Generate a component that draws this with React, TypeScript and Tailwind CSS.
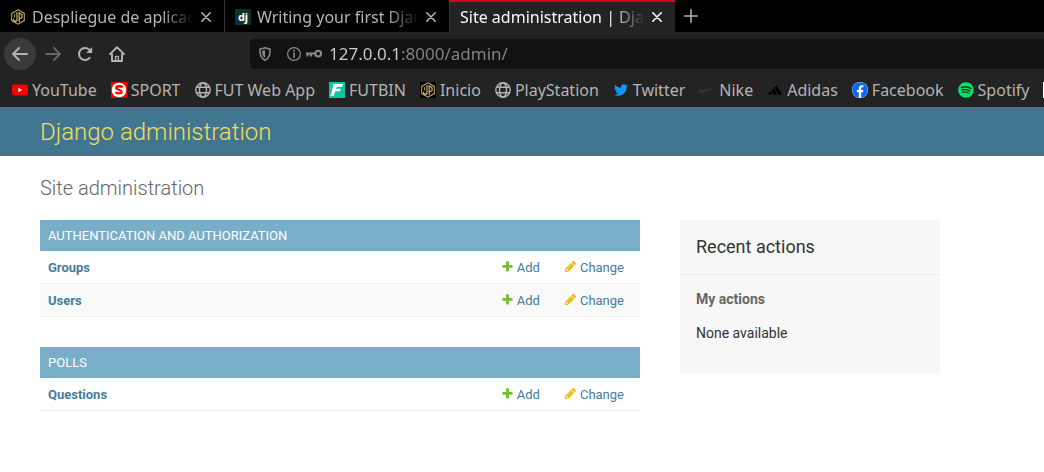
import type { ReactNode } from "react";
import { FaFacebook, FaSpotify, FaTwitter } from "react-icons/fa";
import { SiAdidas, SiNike } from "react-icons/si";

function HexLogo() {
  return (
    <svg viewBox="0 0 16 16" className="size-4 shrink-0 bg-black" fill="none" stroke="#c2a35f" aria-hidden="true">
      <path d="M8 .8 14.3 4.4v7.2L8 15.2 1.7 11.6V4.4z" strokeWidth="1.1" />
      <path d="M7 3v8.600L5.200 12.500 3.600 11.200V9.800" stroke="#dcc283" strokeWidth="1.1" />
      <path d="M9.200 13.200V4l2.800 1.500v3.200L9.200 10" stroke="#dcc283" strokeWidth="1.1" />
      <path d="M4.600 5.200v3.200" strokeWidth="1" />
    </svg>
  );
}

function DjangoLogo() {
  return (
    <span className="flex size-4 shrink-0 items-center justify-center bg-[#113228] pb-0.5 text-[11px] leading-none font-bold text-white" aria-hidden="true">
      dj
    </span>
  );
}

function YouTubeLogo() {
  return (
    <svg viewBox="0 0 16 16" className="size-4 shrink-0" aria-hidden="true">
      <rect x="0" y="2.4" width="16" height="11.2" rx="3" fill="#f00" />
      <path d="M6.4 5.8v4.4L10.2 8z" fill="#fff" />
    </svg>
  );
}

function SportLogo() {
  return (
    <svg viewBox="0 0 16 16" className="size-4 shrink-0" aria-hidden="true">
      <rect width="16" height="16" fill="#f00" />
      <circle cx="8" cy="8" r="7.3" fill="#fff" />
      <path d="M11.6 5.3C10.4 4 5.5 3.6 5.2 5.8c-.2 2 5.6 1.9 5.4 4.1-.3 2-4.8 1.8-6.2.4" fill="none" stroke="#f00" strokeWidth="2.3" />
    </svg>
  );
}

function FutbinLogo() {
  return (
    <svg viewBox="0 0 16 16" className="size-4 shrink-0" aria-hidden="true">
      <rect width="16" height="16" fill="#0cc5a1" />
      <path d="M4.6 2h9.6l-1 2.8H7.8l-.6 1.9h4.6l-.9 2.6H6.3L4.7 14H1.5z" fill="#fff" />
    </svg>
  );
}

function GlobeIcon() {
  return (
    <svg viewBox="0 0 16 16" className="size-4 shrink-0" fill="none" stroke="#b4b4b4" strokeWidth="1.4" aria-hidden="true">
      <circle cx="8" cy="8" r="7.2" />
      <ellipse cx="8" cy="8" rx="3.5" ry="7.2" />
      <path d="M1.7 5.2h12.6M1.7 10.8h12.6" />
    </svg>
  );
}

function FacebookLogo() {
  return (
    <span className="flex size-4 shrink-0 rounded-full bg-white">
      <FaFacebook className="size-4 text-[#0c66f5]" aria-hidden="true" />
    </span>
  );
}

function CloseIcon() {
  return (
    <svg viewBox="0 0 10 10" className="size-2.5" fill="none" stroke="currentColor" strokeWidth="1.6" strokeLinecap="round" aria-hidden="true">
      <path d="m.8.8 8.4 8.4M9.2.8.8 9.2" />
    </svg>
  );
}

function BackIcon() {
  return (
    <svg viewBox="0 0 16 16" className="size-4" fill="none" stroke="currentColor" strokeWidth="1.8" strokeLinecap="round" strokeLinejoin="round" aria-hidden="true">
      <path d="M15 8H1.2M7 2 1 8l6 6" />
    </svg>
  );
}

function ForwardIcon() {
  return (
    <svg viewBox="0 0 16 16" className="size-4" fill="none" stroke="currentColor" strokeWidth="1.8" strokeLinecap="round" strokeLinejoin="round" aria-hidden="true">
      <path d="M1 8h13.8M9 2l6 6-6 6" />
    </svg>
  );
}

function ReloadIcon() {
  return (
    <svg viewBox="0 0 16 16" className="size-4" fill="none" stroke="currentColor" strokeWidth="2" strokeLinecap="round" aria-hidden="true">
      <path d="M12.6 11.8A6 6 0 1 1 12.2 3.6" />
      <path d="M15.2 1v6H9.2z" fill="currentColor" stroke="none" />
    </svg>
  );
}

function HomeIcon() {
  return (
    <svg viewBox="0 0 16 16" className="size-4" fill="none" stroke="currentColor" strokeWidth="1.9" strokeLinecap="round" strokeLinejoin="round" aria-hidden="true">
      <path d="M1 8.2 8 1.2l7 7M3 8v7h10V8" />
      <path d="M6.6 15v-4.6h2.8V15" strokeWidth="1.3" />
    </svg>
  );
}

function ShieldIcon() {
  return (
    <svg viewBox="0 0 14 16" className="h-4 w-3.5" aria-hidden="true">
      <path d="M7 1.8c1.6.7 3.3 1 5.1 1.1 0 5.4-.6 9-5.1 11.5C2.5 11.9 1.9 8.3 1.9 2.9 3.7 2.8 5.4 2.500 7 1.800z" fill="none" stroke="currentColor" strokeWidth="1.5" strokeLinejoin="round" />
      <path d="M7 4v8C4.700 10.300 4.200 8 4.100 4.700 5.100 4.600 6.100 4.400 7 4z" fill="currentColor" />
    </svg>
  );
}

function InfoIcon() {
  return (
    <svg viewBox="0 0 16 16" className="size-4" fill="none" stroke="currentColor" aria-hidden="true">
      <circle cx="8" cy="8" r="6.4" strokeWidth="1.2" />
      <path d="M8 7.2v4.2" strokeWidth="1.6" strokeLinecap="round" />
      <circle cx="8" cy="4.7" r="1" fill="currentColor" stroke="none" />
    </svg>
  );
}

function KeyIcon() {
  return (
    <svg viewBox="0 0 16 16" className="size-4" fill="none" stroke="currentColor" strokeWidth="2" aria-hidden="true">
      <circle cx="12.2" cy="7.6" r="2.9" />
      <path d="M9.5 7.6H0M1.6 7.6v3M5 7.6v2.8" />
    </svg>
  );
}

function AddIcon() {
  return (
    <svg viewBox="0 0 1792 1792" className="size-[13px]" fill="#70bf2b" aria-hidden="true">
      <path d="M1600 796v192q0 40-28 68t-68 28h-416v416q0 40-28 68t-68 28h-192q-40 0-68-28t-28-68v-416h-416q-40 0-68-28t-28-68v-192q0-40 28-68t68-28h416v-416q0-40 28-68t68-28h192q40 0 68 28t28 68v416h416q40 0 68 28t28 68z" />
    </svg>
  );
}

function ChangeIcon() {
  return (
    <svg viewBox="0 0 1792 1792" className="size-[13px]" fill="#efb80b" aria-hidden="true">
      <path d="M491 1536l91-91-235-235-91 91v107h128v128h107zm523-928q0-22-22-22-10 0-17 7l-542 542q-7 7-7 17 0 22 22 22 10 0 17-7l542-542q7-7 7-17zm-54-192l416 416-832 832h-416v-416zm683 96q0 53-37 90l-166 166-416-416 166-165q36-38 90-38 53 0 91 38l235 234q37 39 37 91z" />
    </svg>
  );
}

function Tab({ icon, title, active = false }: { icon?: ReactNode; title: string; active?: boolean }) {
  return (
    <div
      className={
        active
          ? "flex w-[225px] items-center gap-1 border-t-2 border-[#d70022] bg-[#232323] pr-2.5 pl-2.5 text-[#f9f9fa]"
          : "flex w-[225px] items-center gap-1 border-r border-[#333] pt-0.5 pr-2.5 pl-2.5 text-[#b4b4b4]"
      }
    >
      <button type="button" role="tab" aria-selected={active} className="flex min-w-0 flex-1 items-center gap-1.5">
        {icon}
        <span className="min-w-0 flex-1 overflow-hidden mask-r-from-80% text-left whitespace-nowrap">{title}</span>
      </button>
      <button type="button" aria-label={`Close ${title}`} className="flex size-4 shrink-0 items-center justify-center">
        <CloseIcon />
      </button>
    </div>
  );
}

const bookmarks: { label: string; icon: ReactNode }[] = [
  { label: "YouTube", icon: <YouTubeLogo /> },
  { label: "SPORT", icon: <SportLogo /> },
  { label: "FUT Web App", icon: <GlobeIcon /> },
  { label: "FUTBIN", icon: <FutbinLogo /> },
  { label: "Inicio", icon: <HexLogo /> },
  { label: "PlayStation", icon: <GlobeIcon /> },
  { label: "Twitter", icon: <FaTwitter className="size-4 shrink-0 p-px text-[#1098f7]" aria-hidden="true" /> },
  { label: "Nike", icon: <SiNike className="size-4 shrink-0 text-[#3a3a3a]" aria-hidden="true" /> },
  { label: "Adidas", icon: <SiAdidas className="size-4 shrink-0 p-px text-black" aria-hidden="true" /> },
  { label: "Facebook", icon: <FacebookLogo /> },
  { label: "Spotify", icon: <FaSpotify className="size-4 shrink-0 text-[#00e765]" aria-hidden="true" /> },
];

function BrowserChrome() {
  return (
    <div className="bg-[#232323] font-['Noto_Sans',sans-serif] text-base text-[#b4b4b4]">
      <div className="flex h-8 bg-black" role="tablist">
        <Tab icon={<HexLogo />} title="Despliegue de aplicaciones" />
        <Tab icon={<DjangoLogo />} title="Writing your first Django app" />
        <Tab title="Site administration | Django site admin" active />
        <button type="button" aria-label="New tab" className="flex w-8 items-center justify-center">
          <svg viewBox="0 0 14 14" className="size-3.5" stroke="currentColor" strokeWidth="1.6" strokeLinecap="round" aria-hidden="true">
            <path d="M7 .8v12.4M.8 7h12.4" />
          </svg>
        </button>
      </div>
      <div className="flex items-center pt-1.5 pl-1">
        <div className="flex items-center">
          <button type="button" aria-label="Back" className="flex size-8 items-center justify-center rounded-full bg-[#3a3a3a]">
            <BackIcon />
          </button>
          <button type="button" aria-label="Forward" className="flex h-8 w-[33px] items-center justify-center text-[#666]">
            <ForwardIcon />
          </button>
          <button type="button" aria-label="Reload" className="flex size-8 items-center justify-center">
            <ReloadIcon />
          </button>
          <button type="button" aria-label="Home" className="flex size-8 items-center justify-center">
            <HomeIcon />
          </button>
        </div>
        <div className="ml-[117px] flex h-[30px] flex-1 items-center rounded-l bg-[#121212] pl-2 text-[#8a8a8a]">
          <ShieldIcon />
          <span className="ml-3.5 flex gap-1">
            <InfoIcon />
            <KeyIcon />
          </span>
          <input
            type="text"
            aria-label="Address"
            defaultValue="127.0.0.1:8000/admin/"
            className="ml-[7px] min-w-0 flex-1 bg-[linear-gradient(to_right,#cfcfcf_73px,#858585_73px)] bg-clip-text text-[17px] text-transparent outline-none"
          />
        </div>
      </div>
      <nav aria-label="Bookmarks" className="flex h-[37px] items-center gap-3.5 overflow-hidden pt-0.5 pl-3 whitespace-nowrap">
        {bookmarks.map(({ label, icon }) => (
          <a key={label} href="#" className="flex shrink-0 items-center gap-1">
            {icon}
            {label}
          </a>
        ))}
        <span className="size-4 shrink-0 bg-white" />
      </nav>
    </div>
  );
}

function AppModule({ caption, models }: { caption: string; models: string[] }) {
  return (
    <table className="mb-[30px] w-full border-collapse text-[13px] leading-4 text-[#447e9b]">
      <caption className="bg-[#79aec8] px-2 pt-2 pb-[7px] text-left text-white uppercase">
        <a href="#">{caption}</a>
      </caption>
      <tbody>
        {models.map((model) => (
          <tr key={model} className="border-b border-[#eee] even:bg-[#f9f9f9]">
            <th scope="row" className="w-full px-2 pt-[9px] pb-[7px] text-left font-bold">
              <a href="#">{model}</a>
            </th>
            <td className="px-2 pt-[9px] pb-[7px]">
              <a href="#" className="flex items-start gap-[3px]">
                <AddIcon />
                Add
              </a>
            </td>
            <td className="px-4 pt-[9px] pb-[7px]">
              <a href="#" className="flex items-start gap-[3px]">
                <ChangeIcon />
                Change
              </a>
            </td>
          </tr>
        ))}
      </tbody>
    </table>
  );
}

export default function App() {
  return (
    <div className="min-h-screen bg-white">
      <BrowserChrome />
      <div className="font-[Roboto,sans-serif] text-[#333]">
        <header className="bg-[#417690] px-10 pt-[9px] pb-[7px]">
          <div className="text-2xl leading-[33px] font-light text-[#f5dd5d]">
            <a href="#">Django administration</a>
          </div>
        </header>
        <main className="px-10 pt-5">
          <h1 className="mb-5 text-xl leading-6 font-light text-[#666]">Site administration</h1>
          <div className="flex items-start gap-10">
            <div className="max-w-[600px] flex-1">
              <AppModule caption="Authentication and Authorization" models={["Groups", "Users"]} />
              <AppModule caption="Polls" models={["Questions"]} />
            </div>
            <aside className="w-[260px] shrink-0 bg-[#f8f8f8] pb-8">
              <h2 className="border-b border-[#eaeaea] p-4 text-lg leading-[22px]">Recent actions</h2>
              <h3 className="px-4 pt-[15px] text-sm leading-[18px] font-bold text-[#666]">My actions</h3>
              <p className="px-4 pt-4 text-sm leading-[18px]">None available</p>
            </aside>
          </div>
        </main>
      </div>
    </div>
  );
}
